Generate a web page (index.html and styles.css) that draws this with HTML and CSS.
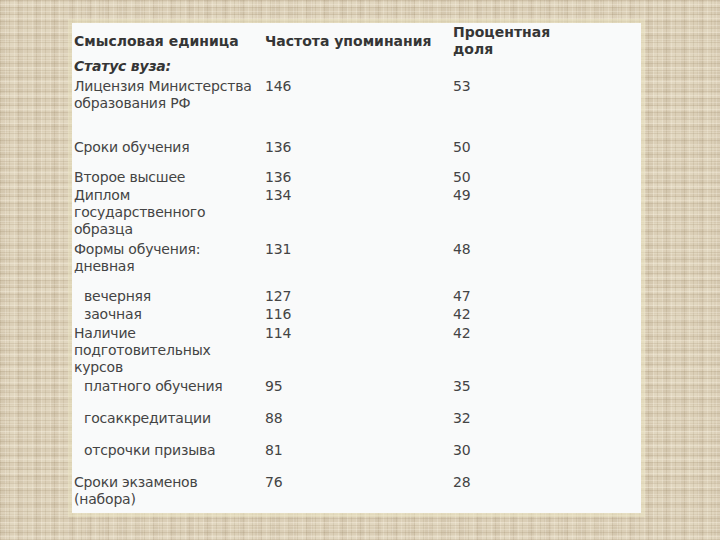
FILE: index.html
```html
<!DOCTYPE html>
<html lang="ru">
<head>
<meta charset="utf-8">
<title>Таблица</title>
<link rel="stylesheet" href="styles.css">
</head>
<body>
<div class="panel">
  <div class="row head">
    <div class="c mid">Смысловая единица</div>
    <div class="c mid">Частота упоминания</div>
    <div class="c">Процентная<br>доля</div>
  </div>
  <div class="row">
    <div class="c"><b><i>Статус вуза:</i></b></div>
    <div class="c"></div>
    <div class="c"></div>
  </div>
  <div class="row m3">
    <div class="c">Лицензия Министерства<br>образования РФ</div>
    <div class="c">146</div>
    <div class="c">53</div>
  </div>
  <div class="row m27">
    <div class="c">Сроки обучения</div>
    <div class="c">136</div>
    <div class="c">50</div>
  </div>
  <div class="row m13">
    <div class="c">Второе высшее</div>
    <div class="c">136</div>
    <div class="c">50</div>
  </div>
  <div class="row m1">
    <div class="c">Диплом<br>государственного<br>образца</div>
    <div class="c">134</div>
    <div class="c">49</div>
  </div>
  <div class="row m3">
    <div class="c">Формы обучения:<br>дневная</div>
    <div class="c">131</div>
    <div class="c">48</div>
  </div>
  <div class="row m13">
    <div class="c ind">вечерняя</div>
    <div class="c">127</div>
    <div class="c">47</div>
  </div>
  <div class="row m1">
    <div class="c ind">заочная</div>
    <div class="c">116</div>
    <div class="c">42</div>
  </div>
  <div class="row m2">
    <div class="c">Наличие<br>подготовительных<br>курсов</div>
    <div class="c">114</div>
    <div class="c">42</div>
  </div>
  <div class="row m2">
    <div class="c ind">платного обучения</div>
    <div class="c">95</div>
    <div class="c">35</div>
  </div>
  <div class="row m15">
    <div class="c ind">госаккредитации</div>
    <div class="c">88</div>
    <div class="c">32</div>
  </div>
  <div class="row m15">
    <div class="c ind">отсрочки призыва</div>
    <div class="c">81</div>
    <div class="c">30</div>
  </div>
  <div class="row m15">
    <div class="c">Сроки экзаменов<br>(набора)</div>
    <div class="c">76</div>
    <div class="c">28</div>
  </div>
</div>
</body>
</html>
```
FILE: styles.css
```css
html, body {
  margin: 0;
  padding: 0;
  width: 720px;
  height: 540px;
  overflow: hidden;
}
body {
  background-color: #dbcfb7;
  background-image:
    repeating-linear-gradient(0deg, rgba(140,118,84,0.16) 0 1px, transparent 1px 3px, rgba(255,250,238,0.25) 3px 4px, transparent 4px 7px),
    repeating-linear-gradient(90deg, rgba(140,118,84,0.14) 0 1px, transparent 1px 5px, rgba(255,250,238,0.22) 5px 6px, transparent 6px 9px),
    repeating-linear-gradient(0deg, rgba(255,248,232,0.18) 0 5px, transparent 5px 13px),
    repeating-linear-gradient(90deg, rgba(130,110,80,0.08) 0 7px, transparent 7px 17px);
  padding-top: 23px;
  font-family: "DejaVu Sans", Verdana, sans-serif;
}
.panel {
  margin-left: 72px;
  width: 569px;
  height: 490px;
  box-sizing: border-box;
  padding: 1px 0 0 2px;
  background: #f9fafa;
  box-shadow: 0 0 0 4px rgba(236,230,196,0.5);
  color: #444;
  font-size: 14px;
  line-height: 17px;
  letter-spacing: -0.2px;
}
.row {
  display: grid;
  grid-template-columns: 191px 188px 1fr;
}
.head {
  font-weight: bold;
  color: #353535;
  letter-spacing: 0;
}
.mid { align-self: center; }
.c b { color: #353535; }
.ind { padding-left: 10px; }
.m1 { margin-top: 1px; }
.m2 { margin-top: 2px; }
.m3 { margin-top: 3px; }
.m13 { margin-top: 13px; }
.m15 { margin-top: 15px; }
.m27 { margin-top: 27px; }
```
